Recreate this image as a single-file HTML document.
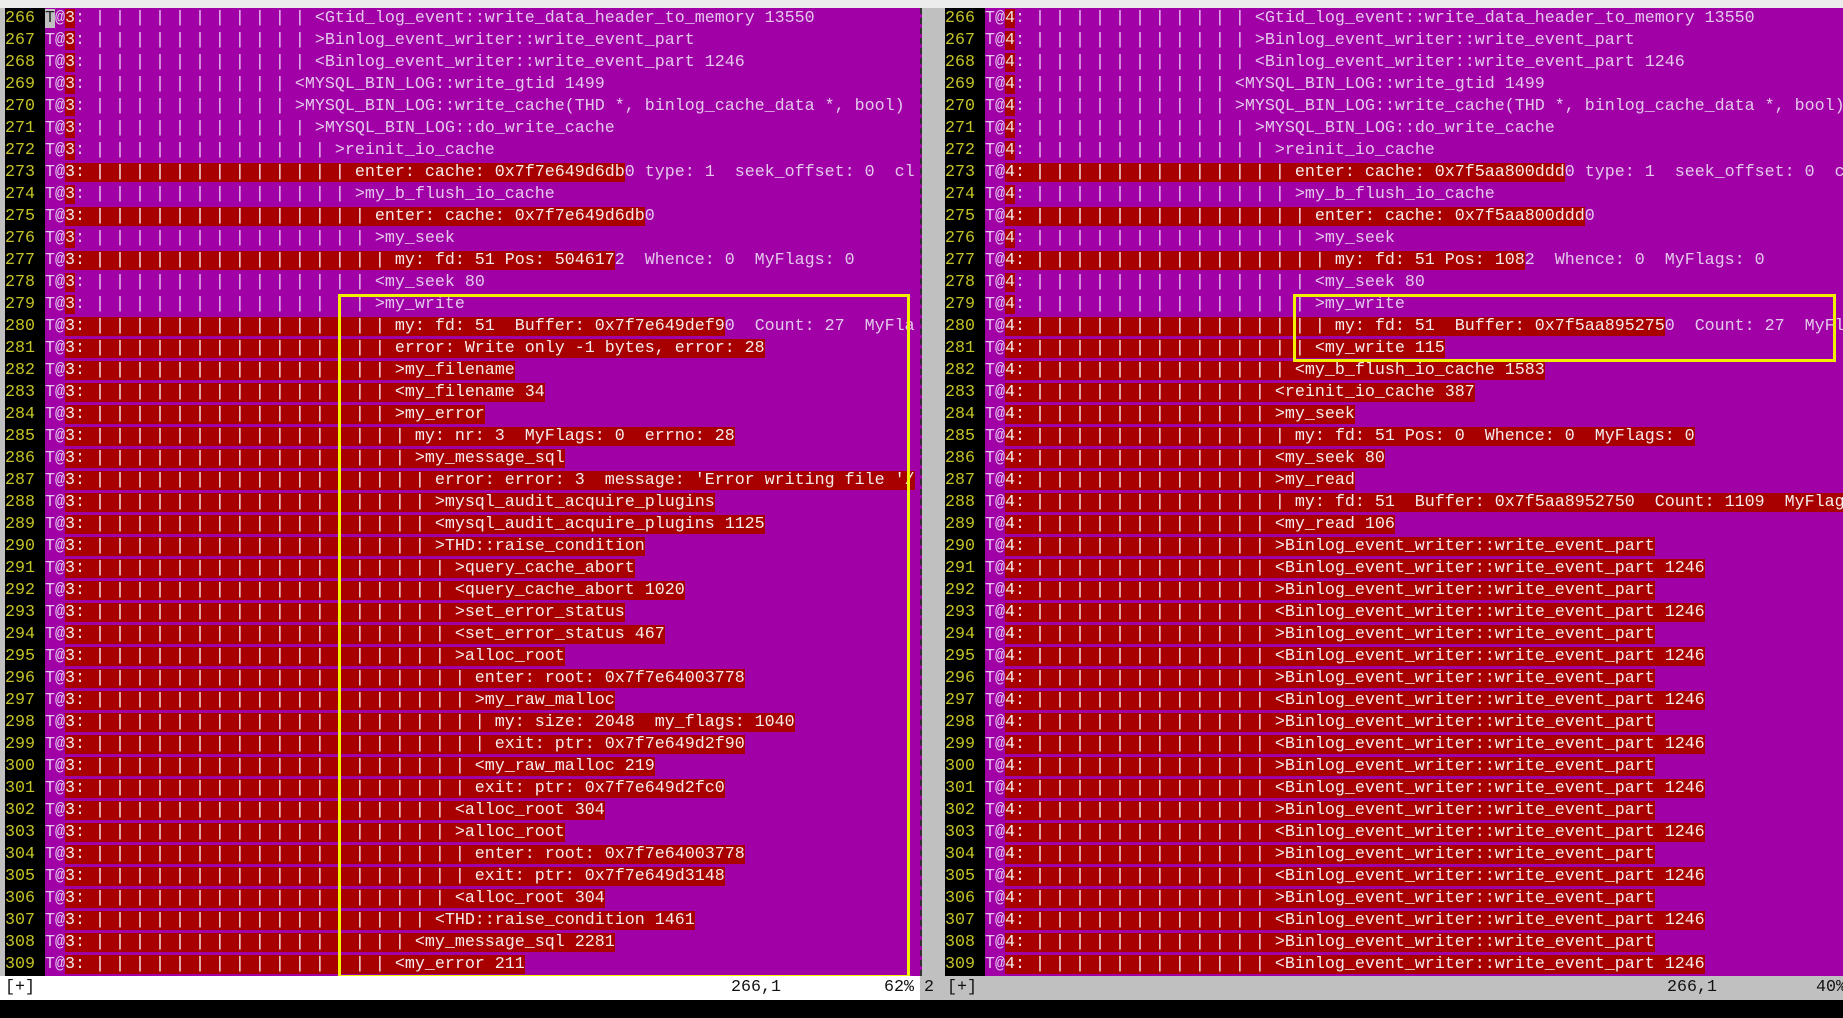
<!DOCTYPE html>
<html><head><meta charset="utf-8"><style>
*{margin:0;padding:0}
body{width:1843px;height:1018px;background:#000;position:relative;overflow:hidden;font-family:"Liberation Mono",monospace;font-size:16.67px}
.top{position:absolute;left:0;top:0;width:1843px;height:8px;background:#ececec}
.pane{position:absolute;top:8px;height:968px;overflow:hidden;background:#a000a6}
#L{left:0;width:915px;border-left:5px solid #c0c0c0;box-sizing:border-box}
#R{left:922px;width:921px;border-left:23px solid #c0c0c0;box-sizing:border-box}
.sep{position:absolute;left:915px;top:8px;width:7px;height:968px;background:#a000a6;border-right:2px dashed #333;box-sizing:border-box}
.l{height:22px;line-height:22px;white-space:pre;color:#e4c8ec;overflow:hidden}
.l b{display:inline-block;width:40px;background:#000;color:#c4c428;font-weight:normal}
.l s{text-decoration:none;background:#a80000;color:#f0e0e0}
.l em{font-style:normal;background:#a80000;color:#f4ecec}
.cur{background:#c0c0c0;color:#222}
.box{position:absolute;border:3px solid #f0f000;box-sizing:border-box}
.st{position:absolute;top:976px;height:24px;line-height:24px;white-space:pre;color:#111}
</style></head><body>
<div class="top"></div>
<div class="pane" id="L">
<div class="l"><b>266 </b><span class="cur">T</span>@<s>3</s>: | | | | | | | | | | | &lt;Gtid_log_event::write_data_header_to_memory 13550</div>
<div class="l"><b>267 </b>T@<s>3</s>: | | | | | | | | | | | &gt;Binlog_event_writer::write_event_part</div>
<div class="l"><b>268 </b>T@<s>3</s>: | | | | | | | | | | | &lt;Binlog_event_writer::write_event_part 1246</div>
<div class="l"><b>269 </b>T@<s>3</s>: | | | | | | | | | | &lt;MYSQL_BIN_LOG::write_gtid 1499</div>
<div class="l"><b>270 </b>T@<s>3</s>: | | | | | | | | | | &gt;MYSQL_BIN_LOG::write_cache(THD *, binlog_cache_data *, bool)</div>
<div class="l"><b>271 </b>T@<s>3</s>: | | | | | | | | | | | &gt;MYSQL_BIN_LOG::do_write_cache</div>
<div class="l"><b>272 </b>T@<s>3</s>: | | | | | | | | | | | | &gt;reinit_io_cache</div>
<div class="l"><b>273 </b>T@<em>3: | | | | | | | | | | | | | enter: cache: 0x7f7e649d6db</em>0 type: 1  seek_offset: 0  cl</div>
<div class="l"><b>274 </b>T@<s>3</s>: | | | | | | | | | | | | | &gt;my_b_flush_io_cache</div>
<div class="l"><b>275 </b>T@<em>3: | | | | | | | | | | | | | | enter: cache: 0x7f7e649d6db</em>0</div>
<div class="l"><b>276 </b>T@<s>3</s>: | | | | | | | | | | | | | | &gt;my_seek</div>
<div class="l"><b>277 </b>T@<em>3: | | | | | | | | | | | | | | | my: fd: 51 Pos: 504617</em>2  Whence: 0  MyFlags: 0</div>
<div class="l"><b>278 </b>T@<s>3</s>: | | | | | | | | | | | | | | &lt;my_seek 80</div>
<div class="l"><b>279 </b>T@<s>3</s>: | | | | | | | | | | | | | | &gt;my_write</div>
<div class="l"><b>280 </b>T@<em>3: | | | | | | | | | | | | | | | my: fd: 51  Buffer: 0x7f7e649def9</em>0  Count: 27  MyFlags: 0</div>
<div class="l"><b>281 </b>T@<em>3: | | | | | | | | | | | | | | | error: Write only -1 bytes, error: 28</em></div>
<div class="l"><b>282 </b>T@<em>3: | | | | | | | | | | | | | | | &gt;my_filename</em></div>
<div class="l"><b>283 </b>T@<em>3: | | | | | | | | | | | | | | | &lt;my_filename 34</em></div>
<div class="l"><b>284 </b>T@<em>3: | | | | | | | | | | | | | | | &gt;my_error</em></div>
<div class="l"><b>285 </b>T@<em>3: | | | | | | | | | | | | | | | | my: nr: 3  MyFlags: 0  errno: 28</em></div>
<div class="l"><b>286 </b>T@<em>3: | | | | | | | | | | | | | | | | &gt;my_message_sql</em></div>
<div class="l"><b>287 </b>T@<em>3: | | | | | | | | | | | | | | | | | error: error: 3  message: 'Error writing file '/var</em></div>
<div class="l"><b>288 </b>T@<em>3: | | | | | | | | | | | | | | | | | &gt;mysql_audit_acquire_plugins</em></div>
<div class="l"><b>289 </b>T@<em>3: | | | | | | | | | | | | | | | | | &lt;mysql_audit_acquire_plugins 1125</em></div>
<div class="l"><b>290 </b>T@<em>3: | | | | | | | | | | | | | | | | | &gt;THD::raise_condition</em></div>
<div class="l"><b>291 </b>T@<em>3: | | | | | | | | | | | | | | | | | | &gt;query_cache_abort</em></div>
<div class="l"><b>292 </b>T@<em>3: | | | | | | | | | | | | | | | | | | &lt;query_cache_abort 1020</em></div>
<div class="l"><b>293 </b>T@<em>3: | | | | | | | | | | | | | | | | | | &gt;set_error_status</em></div>
<div class="l"><b>294 </b>T@<em>3: | | | | | | | | | | | | | | | | | | &lt;set_error_status 467</em></div>
<div class="l"><b>295 </b>T@<em>3: | | | | | | | | | | | | | | | | | | &gt;alloc_root</em></div>
<div class="l"><b>296 </b>T@<em>3: | | | | | | | | | | | | | | | | | | | enter: root: 0x7f7e64003778</em></div>
<div class="l"><b>297 </b>T@<em>3: | | | | | | | | | | | | | | | | | | | &gt;my_raw_malloc</em></div>
<div class="l"><b>298 </b>T@<em>3: | | | | | | | | | | | | | | | | | | | | my: size: 2048  my_flags: 1040</em></div>
<div class="l"><b>299 </b>T@<em>3: | | | | | | | | | | | | | | | | | | | | exit: ptr: 0x7f7e649d2f90</em></div>
<div class="l"><b>300 </b>T@<em>3: | | | | | | | | | | | | | | | | | | | &lt;my_raw_malloc 219</em></div>
<div class="l"><b>301 </b>T@<em>3: | | | | | | | | | | | | | | | | | | | exit: ptr: 0x7f7e649d2fc0</em></div>
<div class="l"><b>302 </b>T@<em>3: | | | | | | | | | | | | | | | | | | &lt;alloc_root 304</em></div>
<div class="l"><b>303 </b>T@<em>3: | | | | | | | | | | | | | | | | | | &gt;alloc_root</em></div>
<div class="l"><b>304 </b>T@<em>3: | | | | | | | | | | | | | | | | | | | enter: root: 0x7f7e64003778</em></div>
<div class="l"><b>305 </b>T@<em>3: | | | | | | | | | | | | | | | | | | | exit: ptr: 0x7f7e649d3148</em></div>
<div class="l"><b>306 </b>T@<em>3: | | | | | | | | | | | | | | | | | | &lt;alloc_root 304</em></div>
<div class="l"><b>307 </b>T@<em>3: | | | | | | | | | | | | | | | | | &lt;THD::raise_condition 1461</em></div>
<div class="l"><b>308 </b>T@<em>3: | | | | | | | | | | | | | | | | &lt;my_message_sql 2281</em></div>
<div class="l"><b>309 </b>T@<em>3: | | | | | | | | | | | | | | | &lt;my_error 211</em></div>
</div>
<div class="sep"></div>
<div class="pane" id="R">
<div class="l"><b>266 </b>T@<s>4</s>: | | | | | | | | | | | &lt;Gtid_log_event::write_data_header_to_memory 13550</div>
<div class="l"><b>267 </b>T@<s>4</s>: | | | | | | | | | | | &gt;Binlog_event_writer::write_event_part</div>
<div class="l"><b>268 </b>T@<s>4</s>: | | | | | | | | | | | &lt;Binlog_event_writer::write_event_part 1246</div>
<div class="l"><b>269 </b>T@<s>4</s>: | | | | | | | | | | &lt;MYSQL_BIN_LOG::write_gtid 1499</div>
<div class="l"><b>270 </b>T@<s>4</s>: | | | | | | | | | | &gt;MYSQL_BIN_LOG::write_cache(THD *, binlog_cache_data *, bool)</div>
<div class="l"><b>271 </b>T@<s>4</s>: | | | | | | | | | | | &gt;MYSQL_BIN_LOG::do_write_cache</div>
<div class="l"><b>272 </b>T@<s>4</s>: | | | | | | | | | | | | &gt;reinit_io_cache</div>
<div class="l"><b>273 </b>T@<em>4: | | | | | | | | | | | | | enter: cache: 0x7f5aa800ddd</em>0 type: 1  seek_offset: 0  cl</div>
<div class="l"><b>274 </b>T@<s>4</s>: | | | | | | | | | | | | | &gt;my_b_flush_io_cache</div>
<div class="l"><b>275 </b>T@<em>4: | | | | | | | | | | | | | | enter: cache: 0x7f5aa800ddd</em>0</div>
<div class="l"><b>276 </b>T@<s>4</s>: | | | | | | | | | | | | | | &gt;my_seek</div>
<div class="l"><b>277 </b>T@<em>4: | | | | | | | | | | | | | | | my: fd: 51 Pos: 108</em>2  Whence: 0  MyFlags: 0</div>
<div class="l"><b>278 </b>T@<s>4</s>: | | | | | | | | | | | | | | &lt;my_seek 80</div>
<div class="l"><b>279 </b>T@<s>4</s>: | | | | | | | | | | | | | | &gt;my_write</div>
<div class="l"><b>280 </b>T@<em>4: | | | | | | | | | | | | | | | my: fd: 51  Buffer: 0x7f5aa895275</em>0  Count: 27  MyFlags: 0</div>
<div class="l"><b>281 </b>T@<em>4: | | | | | | | | | | | | | | &lt;my_write 115</em></div>
<div class="l"><b>282 </b>T@<em>4: | | | | | | | | | | | | | &lt;my_b_flush_io_cache 1583</em></div>
<div class="l"><b>283 </b>T@<em>4: | | | | | | | | | | | | &lt;reinit_io_cache 387</em></div>
<div class="l"><b>284 </b>T@<em>4: | | | | | | | | | | | | &gt;my_seek</em></div>
<div class="l"><b>285 </b>T@<em>4: | | | | | | | | | | | | | my: fd: 51 Pos: 0  Whence: 0  MyFlags: 0</em></div>
<div class="l"><b>286 </b>T@<em>4: | | | | | | | | | | | | &lt;my_seek 80</em></div>
<div class="l"><b>287 </b>T@<em>4: | | | | | | | | | | | | &gt;my_read</em></div>
<div class="l"><b>288 </b>T@<em>4: | | | | | | | | | | | | | my: fd: 51  Buffer: 0x7f5aa8952750  Count: 1109  MyFlags: 0</em></div>
<div class="l"><b>289 </b>T@<em>4: | | | | | | | | | | | | &lt;my_read 106</em></div>
<div class="l"><b>290 </b>T@<em>4: | | | | | | | | | | | | &gt;Binlog_event_writer::write_event_part</em></div>
<div class="l"><b>291 </b>T@<em>4: | | | | | | | | | | | | &lt;Binlog_event_writer::write_event_part 1246</em></div>
<div class="l"><b>292 </b>T@<em>4: | | | | | | | | | | | | &gt;Binlog_event_writer::write_event_part</em></div>
<div class="l"><b>293 </b>T@<em>4: | | | | | | | | | | | | &lt;Binlog_event_writer::write_event_part 1246</em></div>
<div class="l"><b>294 </b>T@<em>4: | | | | | | | | | | | | &gt;Binlog_event_writer::write_event_part</em></div>
<div class="l"><b>295 </b>T@<em>4: | | | | | | | | | | | | &lt;Binlog_event_writer::write_event_part 1246</em></div>
<div class="l"><b>296 </b>T@<em>4: | | | | | | | | | | | | &gt;Binlog_event_writer::write_event_part</em></div>
<div class="l"><b>297 </b>T@<em>4: | | | | | | | | | | | | &lt;Binlog_event_writer::write_event_part 1246</em></div>
<div class="l"><b>298 </b>T@<em>4: | | | | | | | | | | | | &gt;Binlog_event_writer::write_event_part</em></div>
<div class="l"><b>299 </b>T@<em>4: | | | | | | | | | | | | &lt;Binlog_event_writer::write_event_part 1246</em></div>
<div class="l"><b>300 </b>T@<em>4: | | | | | | | | | | | | &gt;Binlog_event_writer::write_event_part</em></div>
<div class="l"><b>301 </b>T@<em>4: | | | | | | | | | | | | &lt;Binlog_event_writer::write_event_part 1246</em></div>
<div class="l"><b>302 </b>T@<em>4: | | | | | | | | | | | | &gt;Binlog_event_writer::write_event_part</em></div>
<div class="l"><b>303 </b>T@<em>4: | | | | | | | | | | | | &lt;Binlog_event_writer::write_event_part 1246</em></div>
<div class="l"><b>304 </b>T@<em>4: | | | | | | | | | | | | &gt;Binlog_event_writer::write_event_part</em></div>
<div class="l"><b>305 </b>T@<em>4: | | | | | | | | | | | | &lt;Binlog_event_writer::write_event_part 1246</em></div>
<div class="l"><b>306 </b>T@<em>4: | | | | | | | | | | | | &gt;Binlog_event_writer::write_event_part</em></div>
<div class="l"><b>307 </b>T@<em>4: | | | | | | | | | | | | &lt;Binlog_event_writer::write_event_part 1246</em></div>
<div class="l"><b>308 </b>T@<em>4: | | | | | | | | | | | | &gt;Binlog_event_writer::write_event_part</em></div>
<div class="l"><b>309 </b>T@<em>4: | | | | | | | | | | | | &lt;Binlog_event_writer::write_event_part 1246</em></div>
</div>
<div class="box" style="left:338px;top:294px;width:572px;height:684px"></div>
<div class="box" style="left:1293px;top:294px;width:543px;height:68px"></div>
<div class="st" style="left:0;width:920px;background:#fff"><span style="position:absolute;left:5px">[+]</span><span style="position:absolute;left:731px">266,1</span><span style="position:absolute;left:884px">62%</span></div>
<div class="st" style="left:920px;width:923px;background:#c0c0c0"><span style="position:absolute;left:4px">2</span><span style="position:absolute;left:27px">[+]</span><span style="position:absolute;left:747px">266,1</span><span style="position:absolute;left:896px">40%</span></div>
</body></html>
